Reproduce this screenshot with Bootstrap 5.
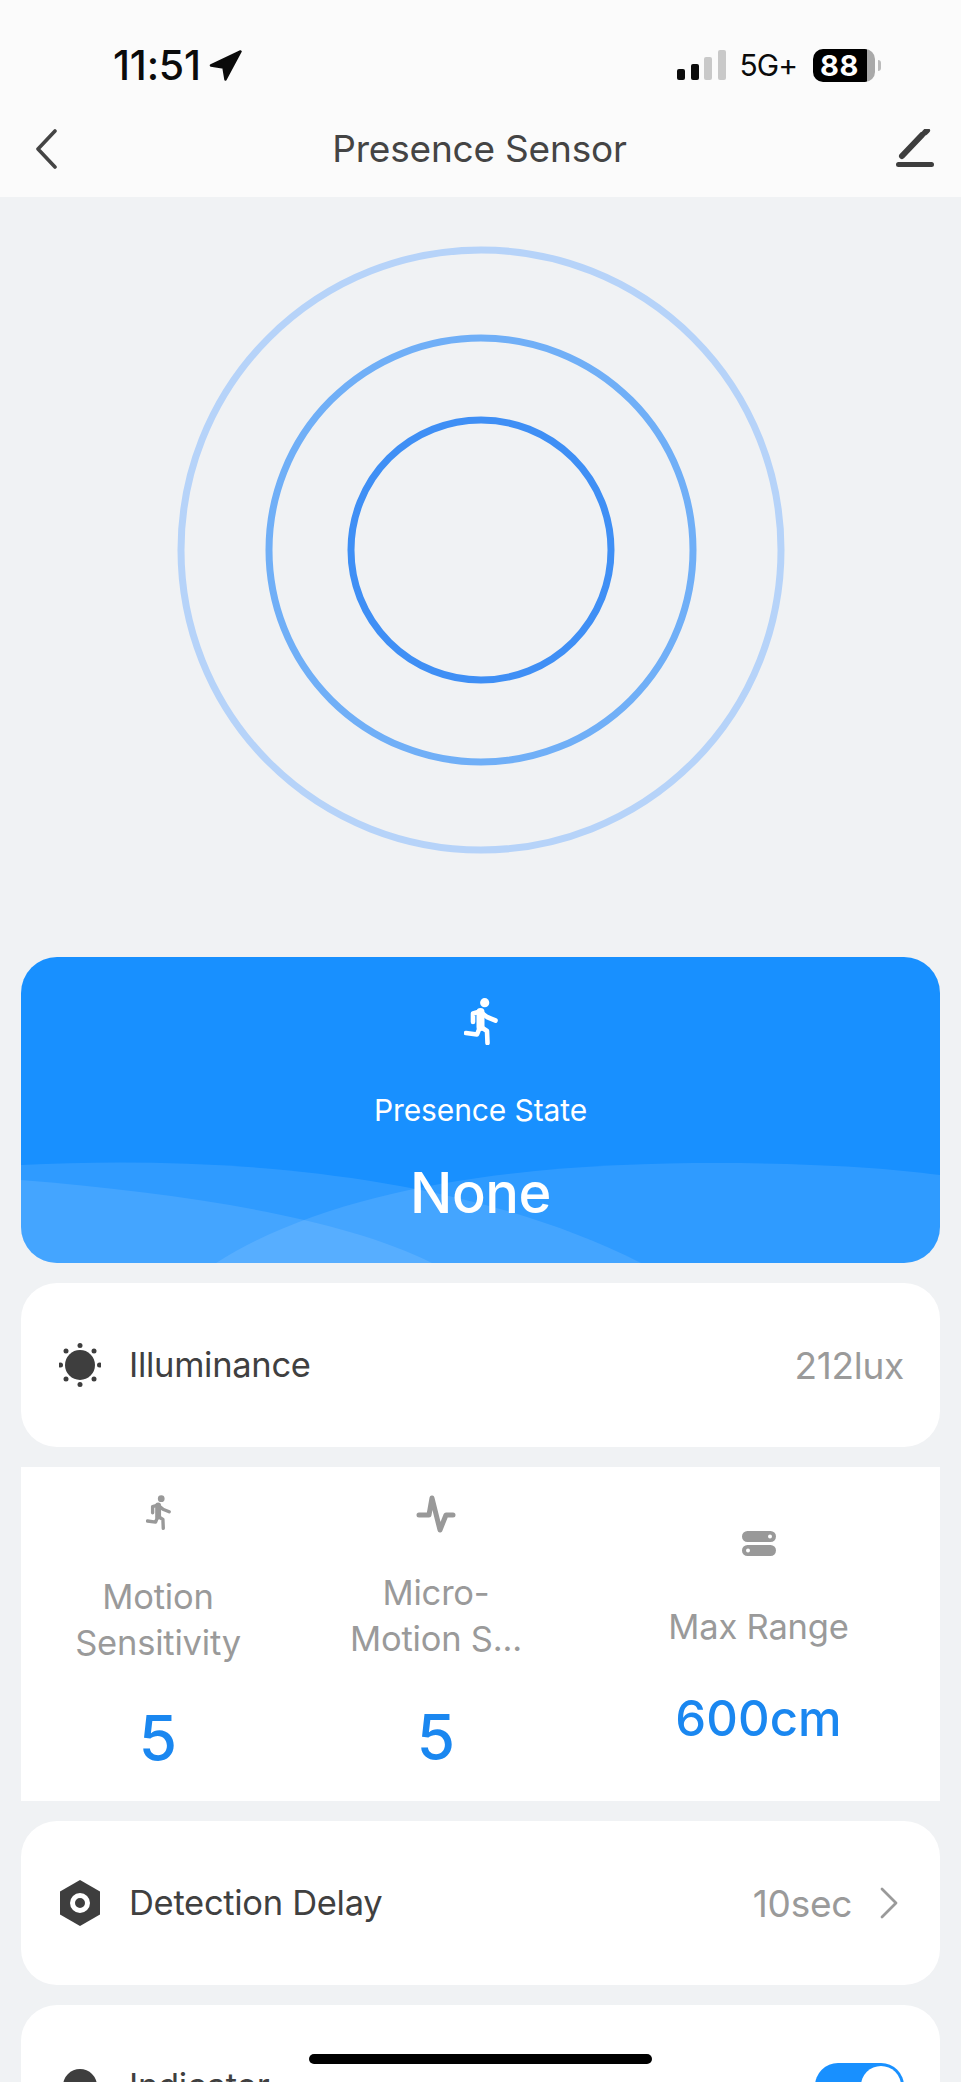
<!DOCTYPE html>
<html lang="en">
<head>
<meta charset="utf-8">
<title>Presence Sensor</title>
<link href="https://cdn.jsdelivr.net/npm/bootstrap@5.3.0/dist/css/bootstrap.min.css" rel="stylesheet">
<style>
html,body{margin:0;background:#f0f2f4;}
body{font-family:Inter,"Liberation Sans",sans-serif;color:#3e3e3e;}
.shell{height:2082px;overflow:hidden;position:relative;background:#f0f2f4;}
.topbar{background:#fbfbfb;height:197px;}
.statusrow{height:100px;padding:30px 80px 0 113px;}
.clock{font-size:41px;font-weight:500;color:#0b0b0b;line-height:1;letter-spacing:-.2px;}
.netlabel{font-size:30px;color:#0b0b0b;line-height:1;letter-spacing:-1px;margin:0 16px 0 14px;}
.batt{width:62px;height:33px;border-radius:10px;background:linear-gradient(90deg,#000 0,#000 87%,#a9a9a9 87%);color:#fff;font-weight:700;font-size:29px;line-height:33px;letter-spacing:.5px;padding-left:7px;}
.battnub{width:3px;height:11px;background:#bbb;border-radius:0 3px 3px 0;margin-left:3px;}
.navrow{height:97px;padding:0 27px 0 35px;}
.navback{width:28px;}
.navtitle{font-size:37px;font-weight:400;color:#444;line-height:1;letter-spacing:-.2px;}
.stage{display:block;width:961px;height:760px;}
.panelwrap{padding:0 21px;}
.heroblock{height:306px;border-radius:36px;background:#1890ff;color:#fff;overflow:hidden;position:relative;}
.heroart{position:absolute;left:0;top:0;}
.herobody{position:relative;padding-top:41px;}
.herolabel{font-size:30px;line-height:1;margin-top:50px;letter-spacing:-.1px;}
.herovalue{font-size:56px;font-weight:500;line-height:1;margin-top:40px;letter-spacing:-.5px;}
.rowcard{background:#fff;border-radius:36px;border:0;height:164px;padding:0 36px 0 38px;margin-top:20px;}
.rowlabel{font-size:34.500px;line-height:1;margin-left:28px;letter-spacing:-.3px;color:#404040;}
.rowvalue{font-size:37px;line-height:1;color:#9a9a9a;letter-spacing:-.3px;}
.rowchev{margin-left:28px;margin-right:6px;}
.rowicon{width:42px;flex:none;}
.statcard{background:#fff;height:334px;margin-top:20px;border-radius:0;}
.statcell{flex:none;text-align:center;}
.cellone{width:274px;padding-bottom:4px;}
.celltwo{width:282px;padding-bottom:5px;}
.cellthree{width:363px;padding-top:6px;}
.statlabel{font-size:34.500px;line-height:46px;color:#9a9a9a;letter-spacing:-.2px;}
.statval{font-weight:500;color:#1a87f0;line-height:1;}
.iconone{margin-bottom:44px;}
.icontwo{margin-bottom:37px;}
.iconthree{margin-bottom:48px;}
.valbig{font-size:62px;margin-top:41px;}
.valmid{font-size:62px;margin-top:44px;}
.valwide{font-size:49px;margin-top:44px;letter-spacing:.1px;}
.lastcard{height:200px;margin-top:20px;}
.lastcard .rowcontent{padding-top:58px;}
.toggle{width:89px;height:46px;border-radius:23px;background:#1890ff;position:relative;}
.toggleknob{position:absolute;right:3px;top:3px;width:40px;height:40px;border-radius:50%;background:#fff;}
.homebar{position:absolute;left:309px;top:2054px;width:343px;height:10px;border-radius:5px;background:#000;}
</style>
</head>
<body>
<svg width="0" height="0" class="position-absolute">
  <symbol id="runner" viewBox="0 0 34 47">
    <circle cx="20.7" cy="4.7" r="4.6" fill="currentColor"/>
    <path d="M9 24V15.500L16 13.500L23 19L31.500 22.500" fill="none" stroke="currentColor" stroke-width="4.600" stroke-linecap="round" stroke-linejoin="round"/>
    <path d="M16.500 14L16.500 29" fill="none" stroke="currentColor" stroke-width="8" stroke-linecap="round"/>
    <path d="M16 29L13 36.500L2 35M17 29L23 33L23.500 45" fill="none" stroke="currentColor" stroke-width="4.600" stroke-linecap="round" stroke-linejoin="round"/>
  </symbol>
</svg>
<div class="shell">
  <header class="topbar">
    <div class="statusrow d-flex align-items-center justify-content-between">
      <div class="d-flex align-items-center">
        <span class="clock">11:51</span>
        <svg class="ms-2" width="33" height="31" viewBox="0 0 33 31"><path d="M31.500 1.500L2 15.500L14.500 17.500L16.500 29.500Z" fill="#0b0b0b" stroke="#0b0b0b" stroke-width="2.500" stroke-linejoin="round"/></svg>
      </div>
      <div class="d-flex align-items-center">
        <svg width="49" height="30" viewBox="0 0 49 30"><rect x="0" y="19" width="8" height="11" rx="2" fill="#0b0b0b"/><rect x="14" y="14" width="8" height="16" rx="2" fill="#0b0b0b"/><rect x="27" y="7" width="8" height="23" rx="2" fill="#c9c9c9"/><rect x="41" y="0" width="8" height="30" rx="2" fill="#c9c9c9"/></svg>
        <span class="netlabel">5G+</span>
        <div class="batt">88</div>
        <div class="battnub"></div>
      </div>
    </div>
    <nav class="navrow d-flex align-items-center justify-content-between">
      <div class="navback"><svg class="d-block" width="22" height="40" viewBox="0 0 22 40"><path d="M20 2L3 20L20 38" fill="none" stroke="#444" stroke-width="3.600" stroke-linecap="round" stroke-linejoin="round"/></svg></div>
      <span class="navtitle">Presence Sensor</span>
      <svg width="38" height="40" viewBox="0 0 38 40"><path d="M6 27L26 6" fill="none" stroke="#3e3e3e" stroke-width="6" stroke-linecap="round"/><path d="M29 3.500L31 1.500" fill="none" stroke="#3e3e3e" stroke-width="6" stroke-linecap="round"/><rect x="0" y="33" width="38" height="5" rx="2.500" fill="#3e3e3e"/></svg>
    </nav>
  </header>

  <svg class="stage" viewBox="0 0 961 760">
    <circle cx="481" cy="353" r="300" fill="none" stroke="#b6d3f9" stroke-width="7"/>
    <circle cx="481" cy="353" r="212" fill="none" stroke="#70aff7" stroke-width="7"/>
    <circle cx="481" cy="353" r="130" fill="none" stroke="#3f8ff5" stroke-width="7"/>
  </svg>

  <main class="panelwrap">
    <section class="heroblock text-center">
      <svg class="heroart" width="919" height="306" viewBox="0 0 919 306">
        <path d="M0 208C190 198 440 214 620 306H0Z" fill="#fff" fill-opacity=".1"/>
        <path d="M0 223C160 236 320 260 411 306H0Z" fill="#fff" fill-opacity=".1"/>
        <path d="M195 306C330 220 540 206 696 206C780 206 860 210 919 218V306Z" fill="#fff" fill-opacity=".1"/>
      </svg>
      <div class="herobody">
        <svg class="d-block mx-auto" width="34" height="47" color="#fff"><use href="#runner"/></svg>
        <div class="herolabel">Presence State</div>
        <div class="herovalue">None</div>
      </div>
    </section>

    <section class="rowcard d-flex align-items-center">
      <svg class="rowicon" height="44" viewBox="0 0 42 44">
        <circle cx="21" cy="22" r="15" fill="#3e3e3e"/>
        <g fill="#3e3e3e"><circle cx="21" cy="2.500" r="2.500"/><circle cx="21" cy="41.500" r="2.500"/><circle cx="1.500" cy="22" r="2.500"/><circle cx="40.500" cy="22" r="2.500"/><circle cx="7" cy="8" r="2.500"/><circle cx="35" cy="8" r="2.500"/><circle cx="7" cy="36" r="2.500"/><circle cx="35" cy="36" r="2.500"/></g>
      </svg>
      <span class="rowlabel me-auto">Illuminance</span>
      <span class="rowvalue">212lux</span>
    </section>

    <section class="statcard d-flex align-items-center">
      <div class="statcell cellone">
        <svg class="d-block mx-auto iconone" width="25" height="35" color="#999"><use href="#runner"/></svg>
        <div class="statlabel">Motion<br>Sensitivity</div>
        <div class="statval valbig">5</div>
      </div>
      <div class="statcell celltwo">
        <svg class="d-block mx-auto icontwo" width="40" height="38" viewBox="0 0 40 38"><path d="M3 20H13L16 3L24 35L30 20H37" fill="none" stroke="#999" stroke-width="5" stroke-linecap="round" stroke-linejoin="round"/></svg>
        <div class="statlabel">Micro-<br>Motion S...</div>
        <div class="statval valmid">5</div>
      </div>
      <div class="statcell cellthree">
        <svg class="d-block mx-auto iconthree" width="34" height="25" viewBox="0 0 34 25"><rect width="34" height="11" rx="5.500" fill="#999"/><rect y="14" width="34" height="11" rx="5.500" fill="#999"/><circle cx="28" cy="5.500" r="2" fill="#fff"/><circle cx="6" cy="19.500" r="2" fill="#fff"/></svg>
        <div class="statlabel">Max Range</div>
        <div class="statval valwide">600cm</div>
      </div>
    </section>

    <section class="rowcard d-flex align-items-center">
      <svg class="rowicon" height="46" viewBox="0 0 42 46">
        <path d="M21 0L41 11.500V34.500L21 46L1 34.500V11.500Z" fill="#3e3e3e"/>
        <circle cx="21" cy="23" r="7.500" fill="#3e3e3e" stroke="#fff" stroke-width="5"/>
      </svg>
      <span class="rowlabel me-auto">Detection Delay</span>
      <span class="rowvalue">10sec</span>
      <svg class="rowchev" width="18" height="32" viewBox="0 0 18 32"><path d="M2 2L16 16L2 30" fill="none" stroke="#9a9a9a" stroke-width="2.800" stroke-linecap="round" stroke-linejoin="round"/></svg>
    </section>

    <section class="rowcard lastcard">
      <div class="rowcontent d-flex align-items-center">
        <svg class="rowicon" height="36" viewBox="0 0 42 36"><circle cx="21" cy="18" r="17" fill="#3e3e3e"/></svg>
        <span class="rowlabel me-auto">Indicator</span>
        <div class="toggle"><div class="toggleknob"></div></div>
      </div>
    </section>
  </main>
  <div class="homebar"></div>
</div>
<script src="https://cdn.jsdelivr.net/npm/bootstrap@5.3.0/dist/js/bootstrap.bundle.min.js"></script>
</body>
</html>
